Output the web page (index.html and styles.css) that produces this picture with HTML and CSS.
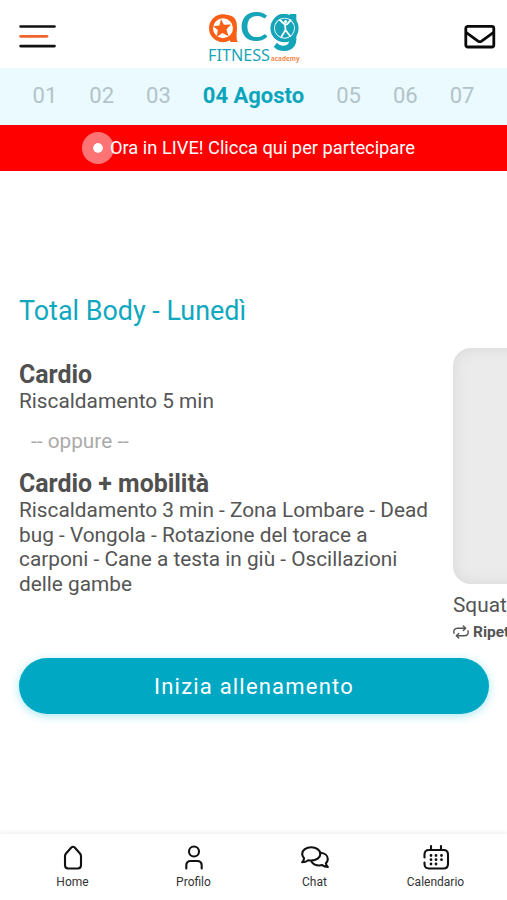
FILE: index.html
```html
<!DOCTYPE html>
<html lang="it">
<head>
  <meta charset="UTF-8">
  <meta name="viewport" content="width=device-width, initial-scale=1.0">
  <title>ACG Fitness Academy</title>
  <link rel="stylesheet" href="styles.css">
</head>
<body>
  <header class="topbar">
    <button class="icon-btn" aria-label="Menu">
      <svg width="38" height="24" viewBox="0 0 38 24" fill="none" stroke-width="2.7" stroke-linecap="round">
        <path d="M2.600 1.500H36.500M2.600 21.100H36.500" stroke="#111"/>
        <path d="M2.600 11.300H29" stroke="#f0642d"/>
      </svg>
    </button>
    <svg class="logo" width="94" height="54" viewBox="0 0 94 54">
      <text class="logo-a" x="4.500" y="31.500">a</text>
      <text class="logo-c" x="31" y="31.300" textLength="30" lengthAdjust="spacingAndGlyphs">c</text>
      <text class="logo-g" x="62.500" y="31">g</text>
      <circle cx="15" cy="18.200" r="12" fill="#fff" stroke="#f95f16" stroke-width="4"/>
      <path d="M13 9l2.800 5.800 7.200-.3-4.600 5 2.200 6.800-6.200-3.200-5.600 3.800 1-6.800-4.600-3.800 6.200-.8z" fill="#f95f16"/>
      <circle cx="76.500" cy="18.200" r="12.300" fill="#fff" stroke="#16a5b8" stroke-width="3.600"/>
      <circle cx="76.500" cy="18.200" r="9.600" fill="#16a5b8"/>
      <circle cx="77.500" cy="11.500" r="1.600" fill="#fff"/>
      <path d="M72 10l4 4 3 .3 3.500-4M77 14l.5 6-4 6.500M77.500 20l4.500 6" fill="none" stroke="#fff" stroke-width="1.800" stroke-linecap="round"/>
      <text class="logo-name" x="0" y="51" textLength="62" lengthAdjust="spacingAndGlyphs">FITNESS</text>
      <text class="logo-sub" x="63" y="51" textLength="28.500" lengthAdjust="spacingAndGlyphs">academy</text>
    </svg>
    <button class="icon-btn" aria-label="Messaggi">
      <svg width="32" height="24" viewBox="0 0 32 24" fill="none" stroke="#0a0a0a" stroke-width="2.8" stroke-linejoin="round">
        <rect x="1.800" y="1.400" width="28" height="20.600" rx="2"/>
        <path d="M2 7.400l12 8.700q1.800 1.200 3.600 0l12-8.700"/>
      </svg>
    </button>
  </header>

  <nav class="days">
    <span>01</span>
    <span>02</span>
    <span>03</span>
    <span class="current">04 Agosto</span>
    <span>05</span>
    <span>06</span>
    <span>07</span>
  </nav>

  <a class="live">
    <span class="live-dot"></span>
    <span class="live-text">Ora in LIVE! Clicca qui per partecipare</span>
  </a>

  <main class="workout">
    <h1>Total Body - Lunedì</h1>
    <div class="slider">
      <section class="slide">
        <h2>Cardio</h2>
        <p>Riscaldamento 5 min</p>
        <p class="or">-- oppure --</p>
        <h2>Cardio + mobilità</h2>
        <p>Riscaldamento 3 min - Zona Lombare - Dead bug - Vongola - Rotazione del torace a carponi - Cane a testa in giù - Oscillazioni delle gambe</p>
      </section>
      <section class="exercise">
        <div class="thumb"></div>
        <p class="exercise-name">Squat</p>
        <p class="repeat">
          <svg width="16" height="14" viewBox="0 0 16 14" fill="none" stroke="#555" stroke-width="1.4" stroke-linecap="round" stroke-linejoin="round">
            <path d="M1 8.200C.2 5 2 3.300 4.500 3.300H12.500M10.300 1l2.400 2.300-2.400 2.300M15 5.800c.8 3.200-1 4.900-3.500 4.900H3.500M5.700 8.400l-2.400 2.300L5.700 13"/>
          </svg>
          <span>Ripetizioni</span>
        </p>
      </section>
    </div>
    <button class="start">Inizia allenamento</button>
  </main>

  <footer class="tabs">
    <a class="tab">
      <svg width="28" height="28" viewBox="0 0 28 28">
        <path d="M12.300 4.500q1.700-1.500 3.400 0l5.300 6q1 1.200 1 2.700v9.100q0 3.200-3.200 3.200H9.200Q6 25.500 6 22.300v-9.100q0-1.500 1-2.700z"/>
      </svg>
      <span>Home</span>
    </a>
    <a class="tab">
      <svg width="28" height="28" viewBox="0 0 28 28">
        <circle cx="14" cy="8.500" r="5"/>
        <path d="M6.300 25.500v-3q0-4.500 4.500-4.500h6.400q4.500 0 4.500 4.500v3"/>
      </svg>
      <span>Profilo</span>
    </a>
    <a class="tab">
      <svg width="28" height="28" viewBox="0 0 28 28">
        <path d="M1.200 19.300Q3 17.500 3 15.200 1.200 13 1.200 10.900C1.200 7 5.200 4.200 10.200 4.200S19.300 7 19.300 10.900s-4 6.700-9.100 6.700q-1.600 0-3-.4-2.600 2.100-6 2.100z"/>
        <path d="M19.500 9.700c4.200.3 7.300 2.900 7.300 6.300 0 1.800-.8 3.100-1.900 4.300q.3 2.200 1.900 3.700-3.300-.1-5.600-1.900-1.400.4-3 .4c-3.200 0-6-1.400-7.500-3.500"/>
      </svg>
      <span>Chat</span>
    </a>
    <a class="tab">
      <svg width="28" height="28" viewBox="0 0 28 28">
        <path d="M2.500 14.500v-3q0-4.500 4.500-4.500h14.500Q26 7 26 11.500v9.500q0 4.500-4.500 4.500H7q-4.500 0-4.500-4.500v-1.500M9 3v4M19 3v4"/>
        <path class="dots" d="M9 12.500h.01M14 12.500h.01M19.500 12.500h.01M9 16.700h.01M14 16.700h.01M19.500 16.700h.01M9 21h.01M14 21h.01"/>
      </svg>
      <span>Calendario</span>
    </a>
  </footer>
</body>
</html>
```

FILE: styles.css
```css
* {
  box-sizing: border-box;
}
body {
  margin: 0;
  height: 100vh;
  display: flex;
  flex-direction: column;
  overflow: hidden;
  font-family: Roboto, "Liberation Sans", sans-serif;
  color: #555;
  background-color: #fff;
}
h1, h2, p {
  margin: 0;
}
button {
  font-family: inherit;
  border: none;
  padding: 0;
  cursor: pointer;
}
svg {
  display: block;
}

/* header */
.topbar {
  display: grid;
  grid-template-columns: 1fr auto 1fr;
  align-items: center;
  height: 68px;
  flex-shrink: 0;
  padding: 6px 11px 0 18px;
}
.icon-btn {
  background: none;
}
.icon-btn:first-child {
  justify-self: start;
}
.icon-btn:last-child {
  justify-self: end;
}
.logo {
  margin-right: 4px;
  overflow: visible;
}
.logo-a {
  font-size: 50px;
  font-weight: 700;
  fill: #f95f16;
}
.logo-c {
  font-family: Lato, sans-serif;
  font-size: 57px;
  fill: #16a5b8;
}
.logo-g {
  font-size: 50px;
  font-weight: 700;
  fill: #16a5b8;
}
.logo-name {
  font-family: "Noto Sans", sans-serif;
  font-size: 17px;
  fill: #16a5b8;
}
.logo-sub {
  font-family: "Open Sans", sans-serif;
  font-size: 7.5px;
  font-weight: 700;
  fill: #f58a4b;
}

/* days */
.days {
  display: flex;
  justify-content: center;
  align-items: center;
  gap: 32px;
  height: 57px;
  flex-shrink: 0;
  padding-bottom: 2px;
  background-color: #eafaff;
  color: #b3c3c9;
  font-size: 22px;
}
.days .current {
  color: #0ba5bb;
  font-weight: 700;
}

/* live banner */
.live {
  display: flex;
  justify-content: center;
  align-items: center;
  height: 46px;
  flex-shrink: 0;
  background-color: #fe0000;
  color: #fff;
  font-size: 18.3px;
}
.live-dot {
  width: 32px;
  height: 32px;
  margin: 0 -4px 0 -10px;
  border: 11px solid rgba(255, 255, 255, 0.45);
  border-radius: 50%;
  background-color: #fff;
  background-clip: padding-box;
}
.live-text {
  padding-bottom: 2px;
}

/* workout */
.workout {
  flex: 1;
  padding: 122px 18px 0 19px;
}
.workout h1 {
  color: #0fa8bf;
  font-size: 26.9px;
  font-weight: 400;
  line-height: 36px;
}
.slider {
  display: flex;
  gap: 20px;
  height: 310px;
  margin-top: 19px;
}
.slide {
  flex: 0 0 414px;
  padding-top: 12px;
}
.slide h2 {
  font-size: 24.9px;
  font-weight: 700;
  line-height: 29px;
  color: #505050;
}
.slide p {
  font-size: 20.8px;
  line-height: 24.5px;
}
.slide .or {
  padding: 15px 12px 16px;
  color: #aaa;
}
.exercise {
  flex: 0 0 300px;
}
.thumb {
  height: 236px;
  border-radius: 18px;
  background-color: #ebebeb;
  box-shadow: inset 0 0 16px rgba(0, 0, 0, 0.08);
}
.exercise-name {
  margin-top: 9px;
  font-size: 20.8px;
  line-height: 25px;
}
.repeat {
  display: flex;
  align-items: center;
  gap: 4px;
  margin-top: 5px;
  font-size: 15.5px;
  font-weight: 700;
}
.start {
  display: block;
  width: 100%;
  height: 56px;
  border-radius: 28px;
  background-color: #00a8c4;
  color: #fff;
  font-size: 22px;
  letter-spacing: 1.2px;
  box-shadow: 0 2px 10px rgba(0, 190, 220, 0.35);
}

/* bottom tabs */
.tabs {
  display: flex;
  height: 66px;
  flex-shrink: 0;
  padding: 9px 11px 0 12px;
  box-shadow: 0 -2px 4px rgba(0, 0, 0, 0.06);
}
.tab {
  flex: 1;
  display: flex;
  flex-direction: column;
  align-items: center;
  gap: 3px;
  font-size: 12px;
  line-height: 16px;
  color: #333;
}
.tab svg {
  fill: none;
  stroke: #111;
  stroke-width: 2.1;
  stroke-linecap: round;
  stroke-linejoin: round;
}
.tab .dots {
  stroke-width: 2.8;
}
```
